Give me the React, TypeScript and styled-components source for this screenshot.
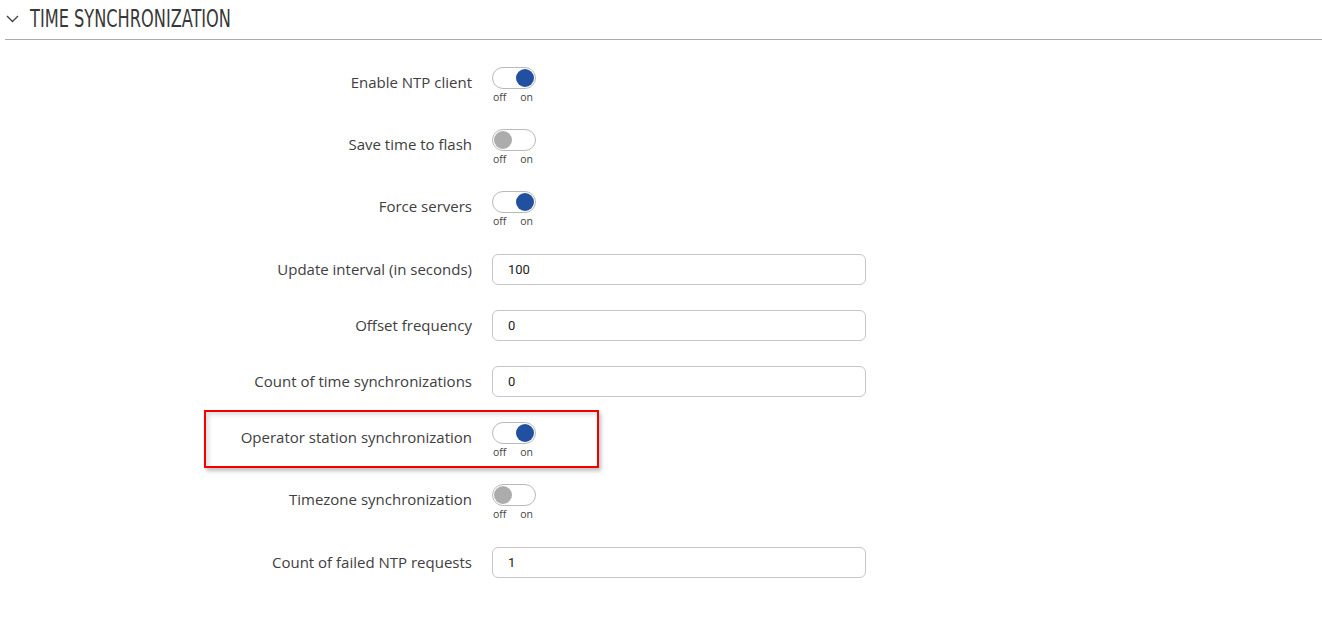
import React from "react";
import styled, { createGlobalStyle } from "styled-components";

const GlobalStyle = createGlobalStyle`
  html, body { margin: 0; padding: 0; background: #fff; }
  body { font-family: "Open Sans", "Noto Sans", sans-serif; color: #404040; }
  * { box-sizing: border-box; }
`;

const Page = styled.div`
  width: 1322px;
  height: 622px;
  overflow: hidden;
`;

const SectionHeader = styled.div`
  margin-left: 5px;
  height: 40px;
  display: flex;
  align-items: center;
  gap: 11px;
  padding-left: 1px;
  padding-bottom: 2px;
  border-bottom: 1px solid #ababab;
`;

const Title = styled.h2`
  margin: 0;
  font-family: "Liberation Sans Narrow", "DejaVu Sans Condensed", "Liberation Sans", sans-serif;
  font-weight: 400;
  font-size: 24px;
  line-height: 28px;
  color: #383838;
  transform-origin: left center;
  transform: scaleX(0.75);
  white-space: nowrap;
`;

const Form = styled.div`
  margin-top: 27px;
  display: flex;
  flex-direction: column;
`;

const Row = styled.div<{ $kind: "toggle" | "input"; $extra?: number }>`
  position: relative;
  display: grid;
  grid-template-columns: 472px 374px;
  column-gap: 20px;
  align-items: ${(p) => (p.$kind === "toggle" ? "start" : "center")};
  margin-top: ${(p) => p.$extra ?? 0}px;
  margin-bottom: ${(p) => (p.$kind === "toggle" ? "26px" : "25px")};
`;

const Label = styled.label<{ $kind: "toggle" | "input" }>`
  text-align: right;
  font-size: 15px;
  line-height: 20px;
  color: #404040;
  margin-top: ${(p) => (p.$kind === "toggle" ? "5px" : "-1px")};
`;

const ToggleBlock = styled.div`
  width: 44px;
  display: flex;
  flex-direction: column;
`;

const Pill = styled.div<{ $on: boolean }>`
  width: 44px;
  height: 22px;
  border: 1px solid #b9b9b9;
  border-radius: 11px;
  background: #fff;
  display: flex;
  align-items: center;
  justify-content: ${(p) => (p.$on ? "flex-end" : "flex-start")};
  padding: 0 1px;
`;

const Knob = styled.div<{ $on: boolean }>`
  width: 18px;
  height: 18px;
  border-radius: 50%;
  background: ${(p) => (p.$on ? "#2150a0" : "#acacac")};
`;

const OffOn = styled.div`
  display: flex;
  justify-content: space-between;
  padding: 3px 3px 0 1px;
  font-size: 10.5px;
  line-height: 11px;
  color: #444;
`;

const TextInput = styled.input`
  width: 374px;
  height: 31px;
  border: 1px solid #c6c6c6;
  border-radius: 6px;
  padding: 0 15px;
  font-family: Roboto, "Liberation Sans", sans-serif;
  font-size: 13px;
  color: #222;
  background: #fff;
  outline: none;
`;

const Highlight = styled.div`
  position: absolute;
  left: 204px;
  top: -12px;
  width: 395px;
  height: 58px;
  border: 2px solid #f20000;
  box-shadow: inset 3px 3px 4px rgba(0, 0, 0, 0.12), 2px 3px 4px rgba(0, 0, 0, 0.25);
  pointer-events: none;
`;

const Chevron = () => (
  <svg width="13" height="8" viewBox="0 0 13 8" fill="none">
    <polyline points="1,1 6.5,6.5 12,1" stroke="#444" strokeWidth="1.4" />
  </svg>
);

const Toggle = ({ on }: { on: boolean }) => (
  <ToggleBlock>
    <Pill $on={on}>
      <Knob $on={on} />
    </Pill>
    <OffOn>
      <span>off</span>
      <span>on</span>
    </OffOn>
  </ToggleBlock>
);

type Field =
  | { kind: "toggle"; label: string; on: boolean; highlight?: boolean }
  | { kind: "input"; label: string; value: string; extra?: number };

const fields: Field[] = [
  { kind: "toggle", label: "Enable NTP client", on: true },
  { kind: "toggle", label: "Save time to flash", on: false },
  { kind: "toggle", label: "Force servers", on: true },
  { kind: "input", label: "Update interval (in seconds)", value: "100", extra: 1 },
  { kind: "input", label: "Offset frequency", value: "0" },
  { kind: "input", label: "Count of time synchronizations", value: "0" },
  { kind: "toggle", label: "Operator station synchronization", on: true, highlight: true },
  { kind: "toggle", label: "Timezone synchronization", on: false },
  { kind: "input", label: "Count of failed NTP requests", value: "1", extra: 1 },
];

export default function App() {
  return (
    <Page>
      <GlobalStyle />
      <SectionHeader>
        <Chevron />
        <Title>TIME SYNCHRONIZATION</Title>
      </SectionHeader>
      <Form>
        {fields.map((f) => (
          <Row key={f.label} $kind={f.kind} $extra={f.kind === "input" ? f.extra : 0}>
            <Label $kind={f.kind}>{f.label}</Label>
            {f.kind === "toggle" ? (
              <Toggle on={f.on} />
            ) : (
              <TextInput defaultValue={f.value} />
            )}
            {f.kind === "toggle" && f.highlight && <Highlight />}
          </Row>
        ))}
      </Form>
    </Page>
  );
}
